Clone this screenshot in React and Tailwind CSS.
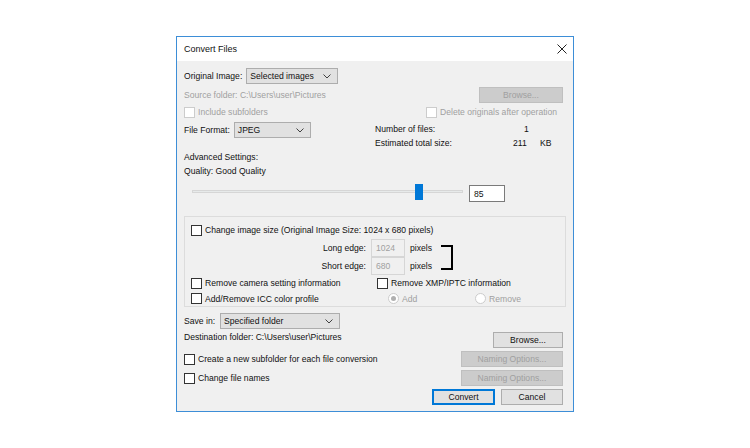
import React from "react";

const font = { fontFamily: '"Liberation Sans", Arial, sans-serif' };

const Chevron = () => (
  <svg width="8" height="5" viewBox="0 0 8 5" fill="none" stroke="#404040" strokeWidth="1">
    <path d="M0.5 0.5 L4 4 L7.5 0.5" />
  </svg>
);

const Select = ({ value, className }) => (
  <div
    className={`flex h-[16px] items-center justify-between border border-[#adadad] bg-[#e1e1e1] pl-[3px] pr-[6px] text-[#111] ${className}`}
  >
    <span>{value}</span>
    <Chevron />
  </div>
);

const Checkbox = ({ label, disabled }) => (
  <div className="flex items-center gap-[3px]">
    <div
      className={`h-[11px] w-[11px] shrink-0 border bg-white ${
        disabled ? "border-[#cccccc]" : "border-[#333333]"
      }`}
    />
    <span className={disabled ? "text-[#a0a0a0]" : "text-[#111]"}>{label}</span>
  </div>
);

const Radio = ({ label, checked }) => (
  <div className="flex items-center gap-[3px] text-[#a0a0a0]">
    <div className="flex h-[11px] w-[11px] items-center justify-center rounded-full border border-[#cccccc] bg-white">
      {checked && <div className="h-[5px] w-[5px] rounded-full bg-[#b0b0b0]" />}
    </div>
    <span>{label}</span>
  </div>
);

const Button = ({ label, disabled, primary, className }) => (
  <div
    className={`flex h-[16px] items-center justify-center border ${
      disabled
        ? "border-[#bfbfbf] bg-[#cccccc] text-[#a0a0a0]"
        : primary
        ? "border-[#0078d7] bg-[#e1e1e1] text-[#111] outline outline-1 outline-[#0078d7] -outline-offset-2"
        : "border-[#adadad] bg-[#e1e1e1] text-[#111]"
    } ${className}`}
  >
    {label}
  </div>
);

export default function App() {
  return (
    <div className="flex min-h-[448px] w-[750px] justify-center bg-white pt-[36px]" style={font}>
      <div className="flex h-[376px] w-[398px] flex-col border border-[#3d8ed7] bg-[#f0f0f0] text-[8.6px] leading-[14px] text-[#111]">
        {/* Title bar */}
        <div className="flex h-[24px] shrink-0 items-center justify-between bg-white pl-[7px] pr-[6px]">
          <span className="text-[9px]">Convert Files</span>
          <svg width="10" height="10" viewBox="0 0 10 10" stroke="#222" strokeWidth="1">
            <path d="M0.5 0.5 L9.5 9.5 M9.5 0.5 L0.5 9.5" />
          </svg>
        </div>

        <div className="flex flex-col px-[7px]">
          {/* Original image */}
          <div className="mt-[7px] flex h-[16px] items-center gap-[4px]">
            <span>Original Image:</span>
            <Select value="Selected images" className="w-[92px]" />
          </div>

          {/* Source folder */}
          <div className="mr-[3px] mt-[3px] flex h-[16px] items-center justify-between">
            <span className="text-[#a0a0a0]">Source folder: C:\Users\user\Pictures</span>
            <Button label="Browse..." disabled className="w-[84px]" />
          </div>

          <div className="mt-[1px] flex h-[16px] items-center">
            <div className="w-[242px]">
              <Checkbox label="Include subfolders" disabled />
            </div>
            <Checkbox label="Delete originals after operation" disabled />
          </div>

          {/* File format + info */}
          <div className="mt-[2px] flex h-[28px] items-start">
            <div className="flex h-[16px] w-[191px] items-center gap-[4px]">
              <span>File Format:</span>
              <Select value="JPEG" className="w-[77px]" />
            </div>
            <div className="flex flex-col">
              <div className="flex h-[14px] items-center">
                <span className="w-[149px]">Number of files:</span>
                <span>1</span>
              </div>
              <div className="flex h-[14px] items-center">
                <span className="w-[138px]">Estimated total size:</span>
                <span className="w-[27px]">211</span>
                <span>KB</span>
              </div>
            </div>
          </div>

          <div className="h-[14px]">Advanced Settings:</div>
          <div className="h-[14px]">Quality: Good Quality</div>

          {/* Slider */}
          <div className="mt-[3px] flex h-[21px] items-center">
            <div className="relative ml-[8px] flex h-[16px] w-[271px] items-center">
              <div className="h-[3px] w-full border border-[#d6d6d6] bg-[#e7eaea]" />
              <div className="absolute left-[223px] top-0 h-[16px] w-[8px] bg-[#0078d7]" />
            </div>
            <div className="ml-[6px] mt-[4px] flex h-[17px] w-[36px] items-center border border-[#7a7a7a] bg-white pl-[4px]">
              85
            </div>
          </div>

          {/* Resize group */}
          <div className="mt-[14px] flex h-[91px] flex-col border border-[#dcdcdc] px-[6px] pt-[6px]">
            <div className="flex h-[14px] items-center">
              <Checkbox label="Change image size (Original Image Size: 1024 x 680 pixels)" />
            </div>
            <div className="mt-[2px] flex">
              <div className="flex flex-col">
                <div className="flex h-[18px] items-center">
                  <span className="w-[180px] pr-[5px] text-right">Long edge:</span>
                  <div className="flex h-[18px] w-[34px] items-center border border-[#d6d6d6] bg-[#f0f0f0] pl-[4px] text-[#a0a0a0]">
                    1024
                  </div>
                  <span className="ml-[5px]">pixels</span>
                </div>
                <div className="flex h-[18px] items-center">
                  <span className="w-[180px] pr-[5px] text-right">Short edge:</span>
                  <div className="flex h-[18px] w-[34px] items-center border border-[#d6d6d6] bg-[#f0f0f0] pl-[4px] text-[#a0a0a0]">
                    680
                  </div>
                  <span className="ml-[5px]">pixels</span>
                </div>
              </div>
              <div className="ml-[9px] mt-[6px] h-[25px] w-[12px] border-y-2 border-r-2 border-black" />
            </div>
            <div className="mt-[1px] flex h-[14px] items-center">
              <div className="w-[186px]">
                <Checkbox label="Remove camera setting information" />
              </div>
              <Checkbox label="Remove XMP/IPTC information" />
            </div>
            <div className="mt-[1px] flex h-[15px] items-center">
              <div className="w-[197px]">
                <Checkbox label="Add/Remove ICC color profile" />
              </div>
              <div className="w-[87px]">
                <Radio label="Add" checked />
              </div>
              <Radio label="Remove" />
            </div>
          </div>

          {/* Save in */}
          <div className="mt-[6px] flex h-[16px] items-center gap-[5px]">
            <span>Save in:</span>
            <Select value="Specified folder" className="w-[120px]" />
          </div>

          <div className="mr-[3px] mt-[1px] flex h-[18px] items-start justify-between">
            <span className="h-[14px]">Destination folder: C:\Users\user\Pictures</span>
            <Button label="Browse..." className="mt-[2px] w-[70px]" />
          </div>

          <div className="mr-[3px] mt-[3px] flex h-[16px] items-center justify-between">
            <Checkbox label="Create a new subfolder for each file conversion" />
            <Button label="Naming Options..." disabled className="w-[102px]" />
          </div>

          <div className="mr-[3px] mt-[3px] flex h-[16px] items-center justify-between">
            <Checkbox label="Change file names" />
            <Button label="Naming Options..." disabled className="w-[102px]" />
          </div>

          <div className="mr-[3px] mt-[3px] flex h-[16px] justify-end gap-[6px]">
            <Button label="Convert" primary className="w-[63px]" />
            <Button label="Cancel" className="w-[62px]" />
          </div>
        </div>
      </div>
    </div>
  );
}
